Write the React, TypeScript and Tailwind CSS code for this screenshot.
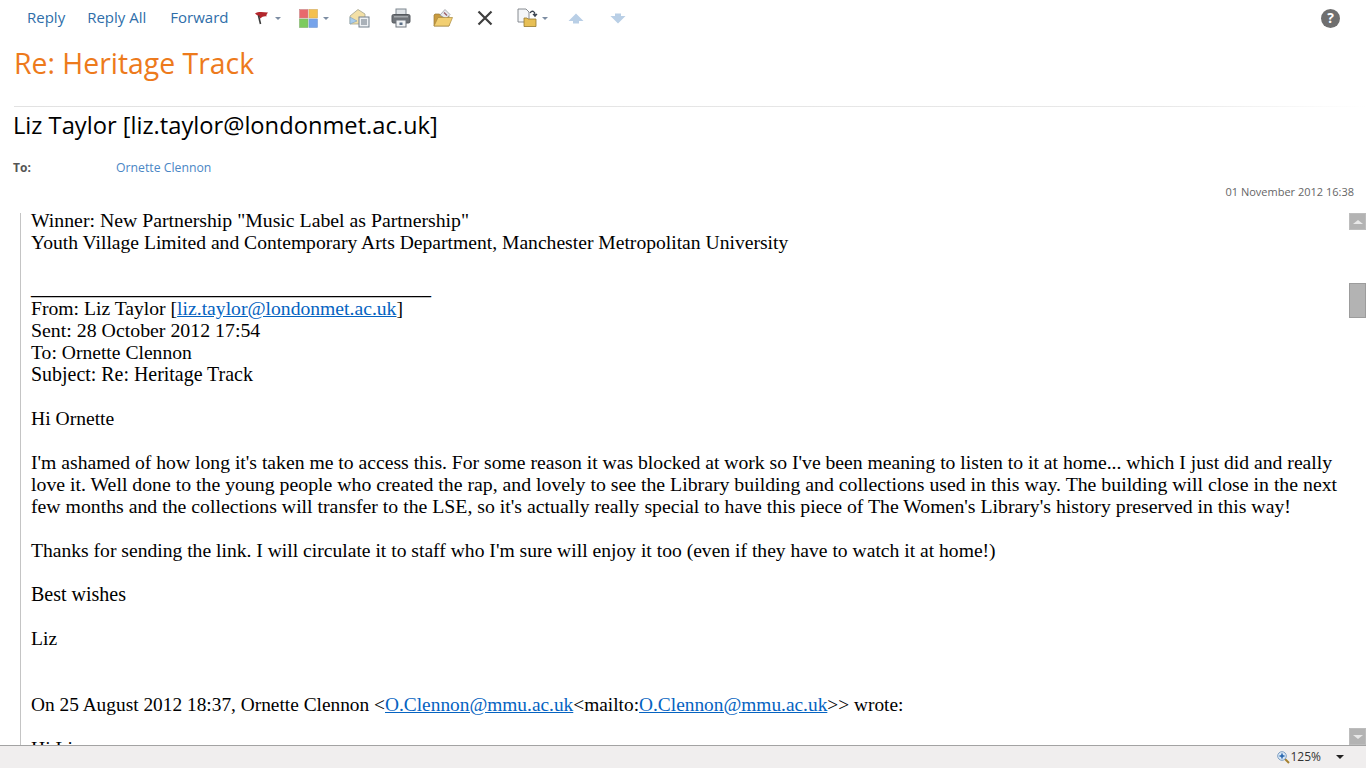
import React from 'react';

const SANS = "font-['Open_Sans','Noto_Sans',sans-serif]";

function Caret({ className = 'border-t-[#7d8da3]' }: { className?: string }) {
  return <span className={`h-0 w-0 border-x-[3px] border-t-[3px] border-x-transparent ${className}`} />;
}

function FlagIcon() {
  return (
    <svg width="16" height="16" viewBox="0 0 16 16">
      <path d="M1 3.5 C4 1.5 8 2 14 2.5 C13 4 12 5 12.5 6.5 C10 6 8 7 6.5 8.5 C5 6.5 3 5 1 3.5 Z" fill="#b3262c" />
      <path d="M4.5 5.5 L6.5 14" stroke="#3b3b3b" strokeWidth="1.6" />
    </svg>
  );
}

function CategoryIcon() {
  return (
    <svg width="19" height="19" viewBox="0 0 19 19">
      <rect x="0.5" y="0.5" width="8.5" height="8.5" fill="#e8686c" stroke="#c9888a" strokeWidth="0.6" />
      <rect x="10" y="0.5" width="8.5" height="8.5" fill="#f4c04e" stroke="#d3ab5e" strokeWidth="0.6" />
      <rect x="0.5" y="10" width="8.5" height="8.5" fill="#7ccb5e" stroke="#80ad6c" strokeWidth="0.6" />
      <rect x="10" y="10" width="8.5" height="8.5" fill="#76a3ea" stroke="#7b9cd0" strokeWidth="0.6" />
    </svg>
  );
}

function MailIcon() {
  return (
    <svg width="21" height="20" viewBox="0 0 21 20">
      <path d="M1 8 L9 1.5 L16 6 L16 16 L1 16 Z" fill="#f3e0a6" stroke="#a5a58f" strokeWidth="0.8" />
      <path d="M1 9 L8 13 L1 16 Z" fill="#a9cdec" stroke="#7e9db8" strokeWidth="0.6" />
      <rect x="10" y="9" width="10" height="10" fill="#eef1f4" stroke="#75808c" />
      <path d="M12 12h6M12 14h6M12 16h6" stroke="#66727f" strokeWidth="1" />
    </svg>
  );
}

function PrintIcon() {
  return (
    <svg width="20" height="20" viewBox="0 0 20 20">
      <rect x="5" y="1" width="10" height="6" fill="#dfe3e7" stroke="#7f8790" />
      <rect x="1" y="6.5" width="18" height="8.5" rx="1.5" fill="#6f7378" stroke="#55595e" />
      <rect x="3" y="8" width="14" height="1.5" fill="#a4a8ac" />
      <rect x="5" y="12" width="10" height="7" fill="#f1f3f5" stroke="#70777f" />
      <rect x="8.5" y="14.5" width="3" height="2.5" fill="#5b6f86" />
    </svg>
  );
}

function FolderIcon() {
  return (
    <svg width="20" height="20" viewBox="0 0 20 20">
      <path d="M1 7 L1 18 L16 18 L16 8 L8 8 L6.5 6 L2 6 Z" fill="#c99b3f" stroke="#9a7a36" strokeWidth="0.7" />
      <path d="M7 7 L12 1.5 L17 6.5 L13 11 Z" fill="#e6e9ee" stroke="#8c8f98" strokeWidth="0.7" />
      <path d="M11 4.5 L14 7.5" stroke="#9a5d66" strokeWidth="1.4" />
      <path d="M1 18 L5 9.5 L19.5 9.5 L16 18 Z" fill="#f2cf72" stroke="#a98a3f" strokeWidth="0.7" />
    </svg>
  );
}

function DeleteIcon() {
  return (
    <svg width="16" height="16" viewBox="0 0 16 16">
      <path d="M1.5 1.5 L14.5 14.5 M14.5 1.5 L1.5 14.5" stroke="#3f3f3f" strokeWidth="2.2" />
    </svg>
  );
}

function MoveIcon() {
  return (
    <svg width="21" height="20" viewBox="0 0 21 20">
      <path d="M1 1 L9 1 L12 4 L12 14 L1 14 Z" fill="#f4f6f8" stroke="#7b8087" strokeWidth="0.9" />
      <path d="M7 18.5 L7 10 L10 10 L11 11 L19 11 L19 18.5 Z" fill="#e7bf55" stroke="#96782e" strokeWidth="0.8" />
      <path d="M13 5 C15 2 18 3 18 7 M16 5.8 L18 8.2 L20 5.8" fill="none" stroke="#3a4350" strokeWidth="1.3" />
    </svg>
  );
}

function UpIcon() {
  return (
    <svg width="16" height="11" viewBox="0 0 16 11">
      <path d="M8 0.5 L15.5 8 L11 8 L11 10.5 L5 10.5 L5 8 L0.5 8 Z" fill="#b9cfe6" />
    </svg>
  );
}

function DownIcon() {
  return (
    <svg width="16" height="11" viewBox="0 0 16 11">
      <path d="M5 0.5 L11 0.5 L11 3 L15.5 3 L8 10.5 L0.5 3 L5 3 Z" fill="#b9cfe6" />
    </svg>
  );
}

function HelpIcon() {
  return (
    <div className={`flex h-[19px] w-[19px] items-center justify-center rounded-full bg-[#6f6f6f] text-[14px] font-bold leading-none text-white ${SANS}`}>
      ?
    </div>
  );
}

function ZoomIcon() {
  return (
    <svg width="13" height="13" viewBox="0 0 13 13">
      <path d="M8 8 L12 12" stroke="#a5812f" strokeWidth="2" />
      <circle cx="5" cy="5" r="4.3" fill="#dbe8f6" stroke="#7d9ec2" />
      <path d="M2.5 5h5M5 2.5v5" stroke="#2463ad" strokeWidth="1.5" />
    </svg>
  );
}

function Toolbar() {
  return (
    <div className="flex h-[36px] shrink-0 items-center pl-[27px] pr-[26px]">
      <div className={`-mt-[2px] flex text-[15px] text-[#2f6ea9] ${SANS}`}>
        <span>Reply</span>
        <span className="ml-[22px]">Reply All</span>
        <span className="ml-[24px]">Forward</span>
      </div>
      <div className="ml-[26px] flex items-center gap-[5px]"><FlagIcon /><Caret /></div>
      <div className="ml-[18px] flex items-center gap-[5px]"><CategoryIcon /><Caret /></div>
      <div className="ml-[20px]"><MailIcon /></div>
      <div className="ml-[21px]"><PrintIcon /></div>
      <div className="ml-[22px]"><FolderIcon /></div>
      <div className="ml-[24px]"><DeleteIcon /></div>
      <div className="ml-[24px] flex items-center gap-[4px]"><MoveIcon /><Caret /></div>
      <div className="ml-[20px]"><UpIcon /></div>
      <div className="ml-[26px]"><DownIcon /></div>
      <div className="ml-auto"><HelpIcon /></div>
    </div>
  );
}

function Header() {
  return (
    <div className={`shrink-0 ${SANS}`}>
      <h1 className="pl-[14px] text-[28.4px] leading-[55px] text-[#ed7a1c]">Re: Heritage Track</h1>
      <div className="ml-[14px] mt-[15px] h-px bg-gradient-to-r from-[#e2e2e2] via-[#e8e8e8] via-85% to-white" />
      <div className="pl-[13px] pt-[1px] text-[23.7px] leading-[34px] text-black">
        Liz Taylor [liz.taylor@londonmet.ac.uk]
      </div>
      <div className="mt-[16px] flex h-[19px] items-center pl-[13px]">
        <span className="w-[103px] text-[12px] font-bold text-[#555]">To:</span>
        <span className="pt-[2px] text-[12.25px] text-[#4a86c5]">Ornette Clennon</span>
      </div>
      <div className="mt-[5px] h-[19px] pr-[12px] text-right text-[11px] leading-[19px] text-[#666]">
        01 November 2012 16:38
      </div>
    </div>
  );
}

function MailLink({ children }: { children: React.ReactNode }) {
  return <span className="text-[#0563c1] underline">{children}</span>;
}

function Scrollbar() {
  return (
    <div className="flex w-[17px] shrink-0 flex-col">
      <div className="flex h-[17px] items-center justify-center border border-[#bdbdbd] bg-[#b3b3b3]">
        <span className="h-0 w-0 border-x-[5px] border-b-[4px] border-x-transparent border-b-[#e8e8e8]" />
      </div>
      <div className="mt-[53px] h-[35px] border border-[#9c9c9c] bg-[#b3b3b3]" />
      <div className="mt-auto flex h-[17px] items-center justify-center border border-[#bdbdbd] bg-[#b3b3b3]">
        <span className="h-0 w-0 border-x-[5px] border-t-[4px] border-x-transparent border-t-[#e8e8e8]" />
      </div>
    </div>
  );
}

function MessageBody() {
  return (
    <div className="flex min-h-0 flex-1 pl-[20px] pt-[12px]">
      <div className="min-w-0 flex-1 overflow-hidden whitespace-nowrap border-l border-[#c4c4c4] pl-[10px] pr-[12px] font-['Liberation_Serif',serif] text-[19.6px] leading-[22px] text-black">
        <p className="-mt-[1px] mb-[2px] -translate-y-px text-[19.78px] leading-[18px]">Winner: New Partnership "Music Label as Partnership"</p>
        <p>Youth Village Limited and Contemporary Arts Department, Manchester Metropolitan University</p>
        <p className="mt-[22px] text-[20px]">________________________________________</p>
        <p className="-translate-y-px text-[19.65px]">From: Liz Taylor [<MailLink>liz.taylor@londonmet.ac.uk</MailLink>]</p>
        <p className="-translate-y-px text-[19.85px]">Sent: 28 October 2012 17:54</p>
        <p>To: Ornette Clennon</p>
        <p className="-translate-y-px text-[19.93px]">Subject: Re: Heritage Track</p>
        <p className="mt-[22px]">Hi Ornette</p>
        <p className="mt-[22px] -translate-y-px text-[19.66px]">I'm ashamed of how long it's taken me to access this. For some reason it was blocked at work so I've been meaning to listen to it at home... which I just did and really</p>
        <p className="-translate-y-px text-[19.8px]">love it. Well done to the young people who created the rap, and lovely to see the Library building and collections used in this way. The building will close in the next</p>
        <p className="-translate-y-px text-[19.77px]">few months and the collections will transfer to the LSE, so it's actually really special to have this piece of The Women's Library's history preserved in this way!</p>
        <p className="mt-[22px]">Thanks for sending the link. I will circulate it to staff who I'm sure will enjoy it too (even if they have to watch it at home!)</p>
        <p className="mt-[22px] -translate-y-px text-[20px]">Best wishes</p>
        <p className="mt-[22px]">Liz</p>
        <p className="mt-[44px] text-[19.36px]">
          On 25 August 2012 18:37, Ornette Clennon &lt;<MailLink>O.Clennon@mmu.ac.uk</MailLink>&lt;mailto:<MailLink>O.Clennon@mmu.ac.uk</MailLink>&gt;&gt; wrote:
        </p>
        <p className="mt-[22px]">Hi Liz</p>
      </div>
      <Scrollbar />
    </div>
  );
}

function StatusBar() {
  return (
    <div className={`flex h-[23px] shrink-0 items-center justify-end border-t border-[#a3a3a3] bg-[#f0eeee] pr-[22px] text-[12px] text-[#333] ${SANS}`}>
      <ZoomIcon />
      <span className="ml-[0px]">125%</span>
      <span className="ml-[15px] h-0 w-0 border-x-[4px] border-t-[4px] border-x-transparent border-t-[#222]" />
    </div>
  );
}

export default function App() {
  return (
    <div className="flex h-[768px] w-[1366px] flex-col overflow-hidden bg-white">
      <Toolbar />
      <Header />
      <MessageBody />
      <StatusBar />
    </div>
  );
}
